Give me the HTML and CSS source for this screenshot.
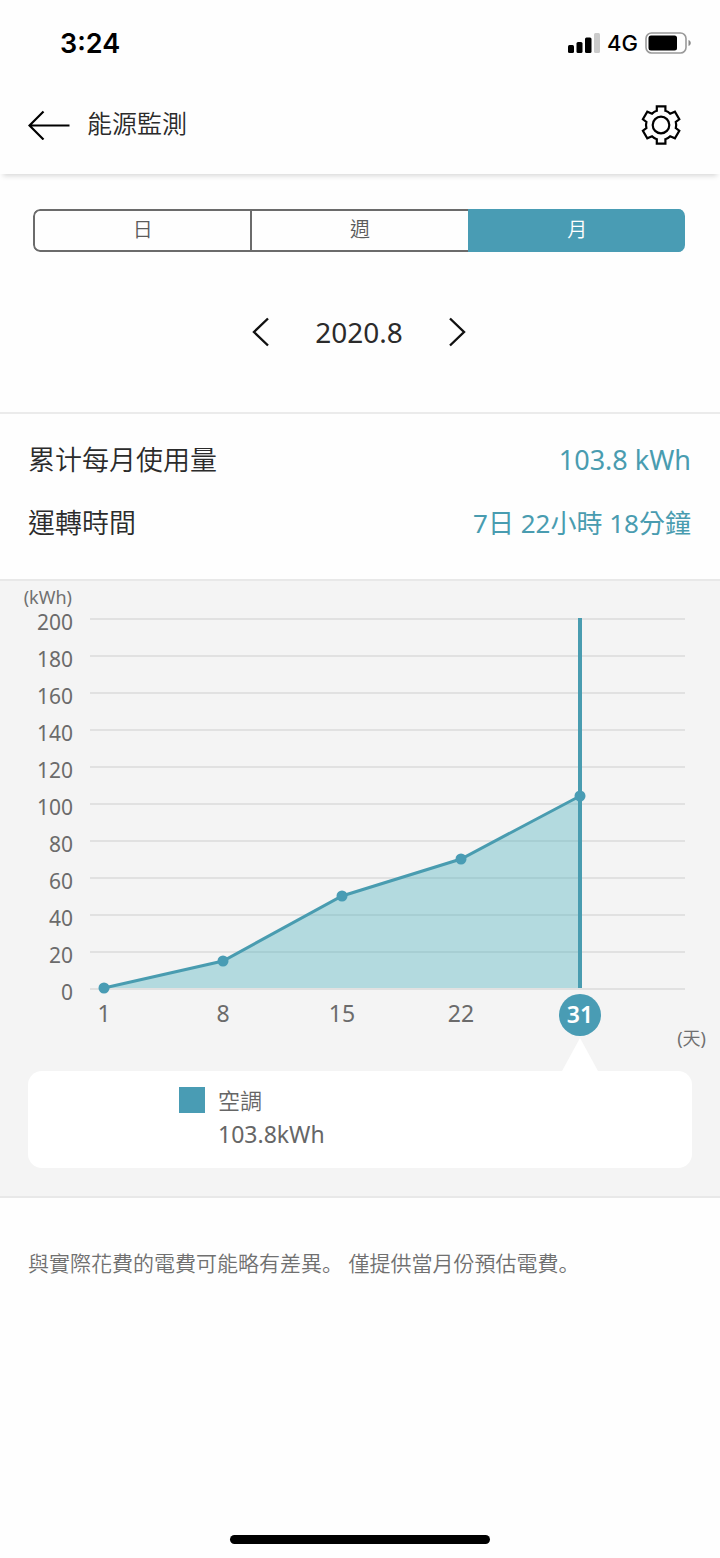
FILE: index.html
```html
<!DOCTYPE html>
<html lang="zh-Hant">
<head>
<meta charset="utf-8">
<meta name="viewport" content="width=device-width, initial-scale=1">
<title>能源監測</title>
<link rel="stylesheet" href="styles.css">
</head>
<body>
<div class="app">
  <div class="status-bar">
    <span class="status-time">3:24</span>
    <div class="status-right">
      <svg class="signal" width="33" height="22" viewBox="0 0 33 22" aria-hidden="true">
        <rect x="1" y="13" width="6" height="8" rx="1.5"/>
        <rect x="9.500" y="10" width="6" height="11" rx="1.500"/>
        <rect x="18" y="5.500" width="6.500" height="15.500" rx="1.500"/>
        <rect x="27" y="1" width="6" height="20" rx="1.500" fill="#cbcbcb"/>
      </svg>
      <span class="network">4G</span>
      <svg class="battery" width="47" height="22" viewBox="0 0 47 22" aria-hidden="true">
        <rect x="1" y="1" width="40" height="20" rx="5.500" fill="none" stroke="#999" stroke-width="1.600"/>
        <rect x="3.500" y="3.500" width="28.500" height="15" rx="2.500"/>
        <path d="M43.500 8c3 1 3 5 0 6z" fill="#888"/>
      </svg>
    </div>
  </div>

  <header class="header">
    <button class="icon-button" type="button" aria-label="返回">
      <svg width="42" height="30" viewBox="0 0 42 30" fill="none" stroke="#000" stroke-width="2.200">
        <path d="M41.500 15.500H1.500M15.500 1.500L1.500 15.500l14 14"/>
      </svg>
    </button>
    <h1 class="title">能源監測</h1>
    <button class="icon-button settings" type="button" aria-label="設定">
      <svg width="40" height="40" viewBox="0 0 40 40" fill="none" stroke="#000" stroke-width="2.200">
        <path d="M15.800 1.300h8.600v4.500q2.800 0.800 4.800 2.900l4.700-2 4.400 7.600-3.500 2.700q0.800 3 0 6l3.500 2.700-4.400 7.600-4.700-2q-2 2.100-4.800 2.900v4.500h-8.600v-4.500q-2.800-0.800-4.800-2.900l-4.700 2-4.400-7.600 3.500-2.700q-0.800-3 0-6l-3.500-2.700 4.400-7.600 4.700 2q2-2.100 4.800-2.900z"/>
        <circle cx="20" cy="20" r="8.300"/>
      </svg>
    </button>
  </header>

  <main>
    <section class="period">
      <div class="tabs" role="group" aria-label="期間">
        <button class="tab" type="button">日</button>
        <button class="tab" type="button">週</button>
        <button class="tab tab-active" type="button" aria-pressed="true">月</button>
      </div>
      <div class="month-nav">
        <button class="icon-button" type="button" aria-label="上個月">
          <svg width="18" height="30" viewBox="0 0 18 30" fill="none" stroke="#111" stroke-width="2.400"><path d="M16 1.500L2 15l14 13.500"/></svg>
        </button>
        <span class="month">2020.8</span>
        <button class="icon-button" type="button" aria-label="下個月">
          <svg width="18" height="30" viewBox="0 0 18 30" fill="none" stroke="#111" stroke-width="2.400"><path d="M2 1.500L16 15 2 28.500"/></svg>
        </button>
      </div>
    </section>

    <dl class="summary">
      <div class="summary-row"><dt>累计每月使用量</dt><dd class="energy">103.8 kWh</dd></div>
      <div class="summary-row"><dt>運轉時間</dt><dd>7日 22小時 18分鐘</dd></div>
    </dl>

    <section class="usage">
      <svg class="chart" viewBox="0 0 720 490" role="img" aria-label="每月用電量">
        <path class="grid-line" d="M90 38H685M90 75H685M90 112H685M90 149H685M90 186H685M90 223H685M90 260H685M90 297H685M90 334H685M90 371H685M90 408H685"/>
        <text class="unit" x="72" y="23" text-anchor="end">(kWh)</text>
        <g class="y-axis" text-anchor="end">
          <text x="73" y="49">200</text>
          <text x="73" y="86">180</text>
          <text x="73" y="123">160</text>
          <text x="73" y="160">140</text>
          <text x="73" y="197">120</text>
          <text x="73" y="234">100</text>
          <text x="73" y="271">80</text>
          <text x="73" y="308">60</text>
          <text x="73" y="345">40</text>
          <text x="73" y="382">20</text>
          <text x="73" y="419">0</text>
        </g>
        <path class="area" d="M104 407L223 380 342 315 461 278 580 215V407z"/>
        <path class="series" d="M104 407L223 380 342 315 461 278 580 215"/>
        <path class="cursor" d="M580 37V407"/>
        <g class="points">
          <circle cx="104" cy="407" r="5.500"/>
          <circle cx="223" cy="380" r="5.500"/>
          <circle cx="342" cy="315" r="5.500"/>
          <circle cx="461" cy="278" r="5.500"/>
          <circle cx="580" cy="215" r="5.500"/>
          <circle cx="580" cy="434" r="21"/>
        </g>
        <g class="x-axis" text-anchor="middle">
          <text x="104" y="441">1</text>
          <text x="223" y="441">8</text>
          <text x="342" y="441">15</text>
          <text x="461" y="441">22</text>
          <text class="x-selected" x="580" y="442">31</text>
        </g>
        <text class="unit" x="706" y="464" text-anchor="end">(天)</text>
        <path d="M580 457L598 490H562z" fill="#fff"/>
      </svg>
      <div class="legend">
        <span class="swatch"></span>
        <div class="legend-text">
          <span class="legend-name">空調</span>
          <span class="legend-value">103.8kWh</span>
        </div>
      </div>
    </section>

    <p class="note">與實際花費的電費可能略有差異<span lang="zh-Hans">。</span> 僅提供當月份預估電費<span lang="zh-Hans">。</span></p>
  </main>

  <div class="home-indicator"></div>
</div>
</body>
</html>
```
FILE: styles.css
```css
* {
  box-sizing: border-box;
}

body {
  margin: 0;
  background: #fefefe;
  color: #2b2b2b;
  font-family: "Noto Sans", "Noto Sans CJK TC", sans-serif;
  font-weight: 350;
}

button {
  padding: 0;
  border: 0;
  background: none;
  color: inherit;
  font: inherit;
}

.app {
  display: flex;
  flex-direction: column;
  min-height: 100vh;
}

.status-bar {
  display: flex;
  align-items: center;
  justify-content: space-between;
  height: 76px;
  padding: 10px 28px 0 60px;
  color: #000;
  font-family: Inter, sans-serif;
}

.status-time {
  font-size: 27px;
  font-weight: 600;
}

.status-right {
  display: flex;
  align-items: center;
  gap: 7px;
}

.network {
  font-size: 22px;
  font-weight: 500;
}

.header {
  display: flex;
  align-items: center;
  height: 98px;
  padding: 0 39px 0 28px;
  box-shadow: 0 5px 5px -3px rgba(0, 0, 0, 0.15);
}

.icon-button {
  display: flex;
  align-items: center;
  justify-content: center;
}

.title {
  margin: 0 0 4px 17px;
  font-size: 25px;
  font-weight: 350;
  line-height: 36px;
}

.settings {
  margin-left: auto;
}

.period {
  padding: 35px 35px 60px 33px;
  border-bottom: 2px solid #ebebeb;
}

.tabs {
  display: grid;
  grid-template-columns: repeat(3, 1fr);
  height: 43px;
  border-radius: 7px;
  overflow: hidden;
}

.tab {
  padding-bottom: 2px;
  border: 2px solid #6b6b6b;
  border-right-width: 0;
  color: #5b5b5b;
  font-size: 20px;
  line-height: 30px;
}

.tab:first-child {
  border-radius: 7px 0 0 7px;
}

.tab-active {
  border-color: #499cb4;
  background: #499cb4;
  color: #fff;
}

.month-nav {
  display: flex;
  align-items: center;
  justify-content: center;
  gap: 45px;
  margin-top: 60px;
}

.month {
  font-size: 28px;
  font-weight: 400;
  line-height: 40px;
}

.summary {
  display: flex;
  flex-direction: column;
  gap: 23px;
  margin: 0;
  padding: 26px 29px 36px 28px;
  border-bottom: 2px solid #e8e8e8;
}

.summary-row {
  display: flex;
  align-items: center;
  justify-content: space-between;
}

.summary dt {
  font-size: 27px;
  line-height: 40px;
}

.summary dd {
  margin: 0;
  color: #499cb0;
  font-size: 26px;
  font-weight: 400;
  line-height: 40px;
}

.summary .energy {
  font-size: 27px;
}

.usage {
  padding-bottom: 28px;
  border-bottom: 2px solid #e8e8e8;
  background: #f4f4f4;
}

.chart {
  display: block;
  width: 100%;
  font-weight: 400;
}

.grid-line {
  stroke: #e1e1e1;
  stroke-width: 2;
}

.unit {
  fill: #707070;
  font-size: 18px;
}

.y-axis {
  fill: #6b6b6b;
  font-size: 21px;
}

.x-axis {
  fill: #6b6b6b;
  font-size: 23px;
}

.x-axis .x-selected {
  fill: #fff;
  font-weight: 600;
}

.area {
  fill: rgba(74, 175, 190, 0.38);
}

.series {
  fill: none;
  stroke: #499cb0;
  stroke-width: 3;
}

.cursor {
  stroke: #499cb0;
  stroke-width: 4;
}

.points {
  fill: #499cb4;
}

.legend {
  display: flex;
  gap: 13px;
  margin: 0 28px;
  padding: 12px 20px 17px 151px;
  border-radius: 14px;
  background: #fff;
}

.swatch {
  width: 26px;
  height: 26px;
  margin-top: 4px;
  background: #499cb4;
}

.legend-text {
  display: flex;
  flex-direction: column;
  color: #666;
  font-size: 23px;
  line-height: 34px;
}

.legend-name {
  font-size: 22px;
}

.legend-value {
  font-weight: 400;
}

.note {
  margin: 0;
  padding: 49px 28px;
  color: #707070;
  font-size: 21px;
  line-height: 30px;
}

.note span {
  font-family: "Noto Sans CJK SC", sans-serif;
}

.home-indicator {
  width: 36%;
  height: 9px;
  margin: auto auto 14px;
  border-radius: 5px;
  background: #000;
}
```
